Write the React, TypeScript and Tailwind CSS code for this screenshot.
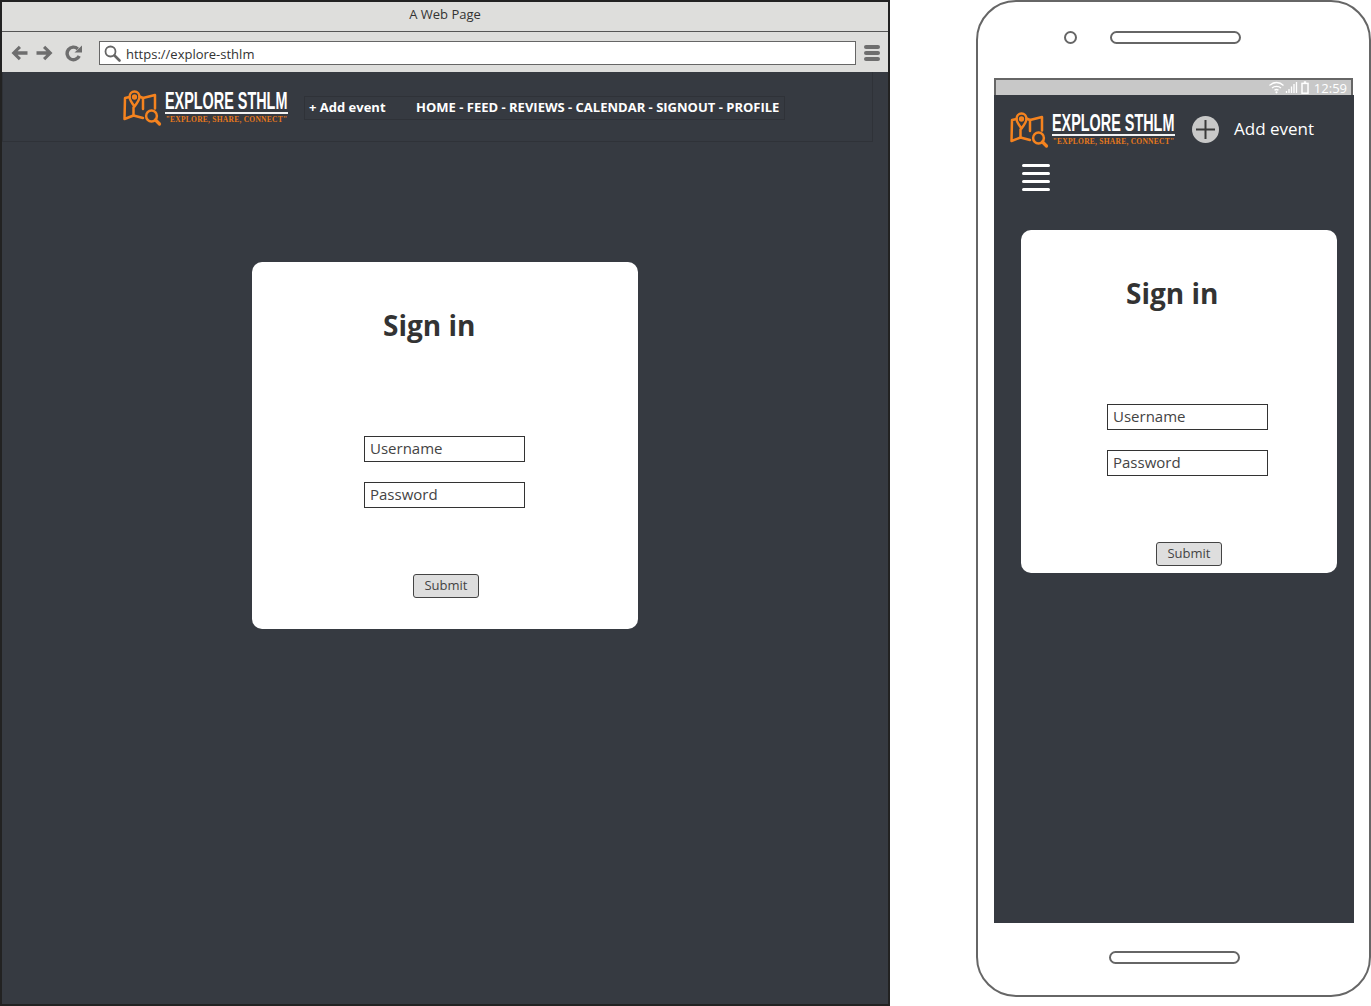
function LogoIcon() {
  return (
    <svg width="40" height="40" viewBox="0 0 40 40" fill="none" stroke="#f5831f" strokeWidth="2.5" strokeLinecap="round" strokeLinejoin="round" className="shrink-0">
      <path d="M6.5 9 L2 10 L1.5 31 L10.5 27.5 L20 30" />
      <path d="M16.5 8.5 L20 10 L32 7 L32 20.5" />
      <path d="M20 10 L20 21" />
      <path d="M11.5 18.5 C8.5 14.5 6.5 11.5 6.5 9 C6.5 6 8.7 3.5 11.5 3.5 C14.3 3.5 16.5 6 16.5 9 C16.5 11.5 14.5 14.5 11.5 18.5 Z" />
      <circle cx="11.5" cy="9" r="1.4" />
      <path d="M10.5 19.5 L10.5 27.5" />
      <circle cx="28.5" cy="28" r="5.4" />
      <path d="M32.5 32 L36.5 36" strokeWidth="3.2" />
    </svg>
  );
}

function Logo() {
  return (
    <div className="flex items-center gap-[2px]">
      <LogoIcon />
      <div className="w-[123px] shrink-0">
        <div className="h-[20px] w-[123px] overflow-visible">
          <div className="w-[205px] origin-left scale-x-[0.6] whitespace-nowrap font-['Liberation_Sans',sans-serif] text-[24px] font-bold leading-[20px] text-white">
            EXPLORE STHLM
          </div>
        </div>
        <div className="mt-[1px] h-[2px] bg-[#f2f2f2]" />
        <div className="mt-[1px] h-[10px] w-[123px] whitespace-nowrap text-center font-['Liberation_Serif',serif] text-[7.5px] font-bold leading-[10px] tracking-[0.25px] text-[#e8791b]">
          "EXPLORE, SHARE, CONNECT"
        </div>
      </div>
    </div>
  );
}

function SignInCard({ card, title, fields, submit }: { card: string; title: string; fields: string; submit: string }) {
  return (
    <div className={`flex flex-col rounded-[10px] bg-white pt-[43px] text-[#333] ${card}`}>
      <h1 className={`h-[40px] text-[28px] font-bold leading-[40px] text-[#333] ${title}`}>Sign in</h1>
      <div className={`mt-[91px] flex w-[161px] flex-col gap-[20px] ${fields}`}>
        <input readOnly placeholder="Username" className="h-[26px] w-[161px] border border-[#333] bg-white px-[5px] pb-[2px] text-[15px] leading-[22px] placeholder:text-[#444] outline-none" />
        <input readOnly placeholder="Password" className="h-[26px] w-[161px] border border-[#333] bg-white px-[5px] pb-[2px] text-[15px] leading-[22px] placeholder:text-[#444] outline-none" />
      </div>
      <button className={`mt-[66px] h-[24px] w-[66px] rounded-[3px] border border-[#444] bg-[#dedede] pb-[2px] text-[13px] leading-[20px] text-[#444] ${submit}`}>
        Submit
      </button>
    </div>
  );
}

function BrowserWindow() {
  return (
    <div className="flex h-[1006px] w-[890px] shrink-0 flex-col border-2 border-[#222] bg-[#363a41]">
      <div className="flex h-[30px] shrink-0 items-center justify-center border-b border-[#555] bg-[#dededc] pb-[4px] text-[13px] text-[#333]">
        A Web Page
      </div>
      <div className="flex h-[40px] shrink-0 items-center bg-[#dededc] pl-[9px] pr-[7px] pt-[2px]">
        <svg width="17" height="16" viewBox="0 0 17 16" fill="#6e6e6e" className="shrink-0">
          <path d="M0.5 8 L7.8 0.8 L10 3 L6.6 6.2 L16.5 6.2 L16.5 9.8 L6.6 9.8 L10 13 L7.8 15.2 Z" />
        </svg>
        <svg width="17" height="16" viewBox="0 0 17 16" fill="#6e6e6e" className="ml-[8px] shrink-0">
          <path d="M16.5 8 L9.2 0.8 L7 3 L10.4 6.2 L0.5 6.2 L0.5 9.8 L10.4 9.8 L7 13 L9.2 15.2 Z" />
        </svg>
        <svg width="18" height="17" viewBox="0 0 18 17" fill="none" className="ml-[12px] shrink-0">
          <path d="M14.2 11 A6.3 6.3 0 1 1 12.8 3.9" stroke="#6e6e6e" strokeWidth="3.4" />
          <path d="M9.5 7.5 L17 7.5 L17 0.5 Z" fill="#6e6e6e" />
        </svg>
        <div className="ml-[16px] flex h-[24px] w-[757px] shrink-0 items-center border border-[#666] bg-white pl-[4px] text-[13px] text-[#333]">
          <svg width="17" height="17" viewBox="0 0 17 17" fill="none" className="mr-[5px] shrink-0">
            <circle cx="6.5" cy="6.5" r="5" stroke="#666" strokeWidth="1.8" />
            <path d="M10.5 10.5 L15.5 15.5" stroke="#666" strokeWidth="2.6" strokeLinecap="round" />
          </svg>
          <span className="pt-[3px]">https://explore-sthlm</span>
        </div>
        <div className="ml-[8px] flex w-[16px] shrink-0 flex-col gap-[2px]">
          <div className="h-[4px] rounded-full bg-[#6e6e6e]" />
          <div className="h-[4px] rounded-full bg-[#6e6e6e]" />
          <div className="h-[4px] rounded-full bg-[#6e6e6e]" />
        </div>
      </div>
      <div className="flex h-[70px] w-[871px] shrink-0 items-center border border-t-0 border-[#2f3238] pl-[120px] pt-[2px]">
        <Logo />
        <div className="ml-[16px] flex h-[24px] w-[481px] shrink-0 items-center border border-[#2f3238] pl-[4px] text-[13px] font-bold text-white">
          <span className="w-[107px] shrink-0">+ Add event</span>
          <span className="whitespace-nowrap">HOME - FEED - REVIEWS - CALENDAR - SIGNOUT - PROFILE</span>
        </div>
      </div>
      <div className="ml-[250px] mt-[120px]">
        <SignInCard card="w-[386px] pb-[31px]" title="ml-[131px]" fields="ml-[112px]" submit="ml-[161px]" />
      </div>
    </div>
  );
}

function StatusIcons() {
  return (
    <svg width="40" height="13" viewBox="0 0 40 13" fill="none" className="shrink-0">
      <path d="M0.5 4.5 C4.5 0.5 10.5 0.5 14.5 4.5 M3 7 C5.5 4.8 9.5 4.8 12 7 M5.5 9.3 C6.8 8.3 8.2 8.3 9.5 9.3" stroke="#fff" strokeWidth="1.3" />
      <circle cx="7.5" cy="11.3" r="1.1" fill="#fff" />
      <path d="M17.5 12 V10 M20 12 V8 M22.5 12 V5.5 M25 12 V3 M27.5 12 V1" stroke="#fff" strokeWidth="1.3" />
      <rect x="33" y="2.4" width="6" height="9.8" stroke="#fff" strokeWidth="1.5" />
      <rect x="34.8" y="0.3" width="2.4" height="1.6" fill="#fff" />
    </svg>
  );
}

function Phone() {
  return (
    <div className="ml-[86px] flex h-[997px] w-[395px] shrink-0 flex-col rounded-[40px] border-2 border-[#666] bg-white">
      <div className="ml-[86px] mt-[28px] flex h-[14px] shrink-0 items-center">
        <div className="h-[13px] w-[13px] rounded-full border-2 border-[#666]" />
        <div className="ml-[33px] h-[13px] w-[131px] rounded-full border-2 border-[#666]" />
      </div>
      <div className="ml-[16px] mt-[34px] flex h-[17px] w-[359px] shrink-0 items-center justify-end border-x-2 border-t-2 border-[#666] bg-[#c8c8c8] pr-[4px]">
        <StatusIcons />
        <span className="ml-[5px] text-[13px] font-medium leading-[14px] text-white">12:59</span>
      </div>
      <div className="ml-[16px] flex h-[828px] w-[360px] shrink-0 flex-col bg-[#363a41]">
        <div className="ml-[16px] mt-[15px] flex h-[40px] items-center">
          <Logo />
          <div className="ml-[17px] mb-[2px] flex h-[27px] w-[27px] shrink-0 items-center justify-center rounded-full bg-[#c8c8c8]">
            <svg width="19" height="19" viewBox="0 0 19 19" stroke="#3a3a3a" strokeWidth="2">
              <path d="M9.5 0 V19 M0 9.5 H19" />
            </svg>
          </div>
          <span className="ml-[15px] mb-[2px] whitespace-nowrap text-[17px] text-white">Add event</span>
        </div>
        <div className="ml-[28px] mt-[14px] flex w-[28px] flex-col gap-[5px]">
          <div className="h-[3px] rounded-full bg-white" />
          <div className="h-[3px] rounded-full bg-white" />
          <div className="h-[3px] rounded-full bg-white" />
          <div className="h-[3px] rounded-full bg-white" />
        </div>
        <div className="ml-[27px] mt-[39px]">
          <SignInCard card="w-[316px] pb-[7px]" title="ml-[105px]" fields="ml-[86px]" submit="ml-[135px]" />
        </div>
      </div>
      <div className="ml-[131px] mt-[28px] h-[13px] w-[131px] shrink-0 rounded-full border-2 border-[#666]" />
    </div>
  );
}

export default function App() {
  return (
    <div className="flex h-[1006px] w-[1371px] overflow-hidden bg-white font-['Open_Sans',sans-serif]">
      <BrowserWindow />
      <Phone />
    </div>
  );
}
